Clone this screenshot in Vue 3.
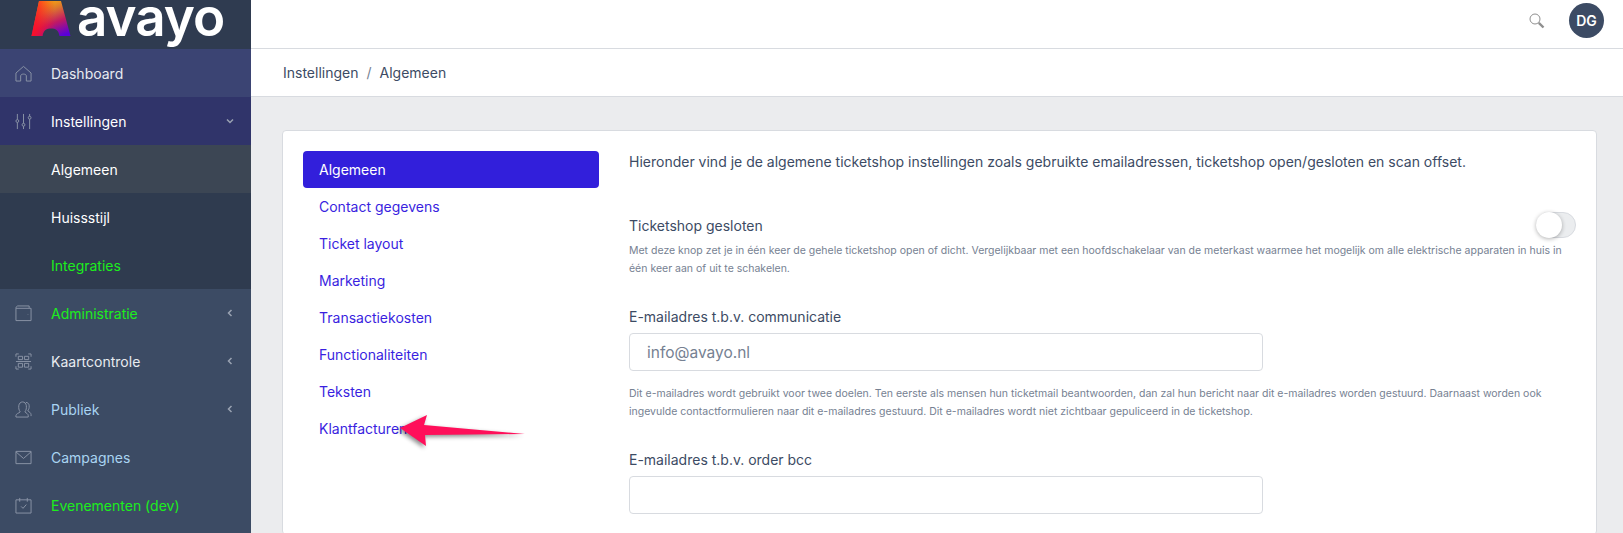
<script setup>
const settingsTabs = ['Algemeen', 'Contact gegevens', 'Ticket layout', 'Marketing', 'Transactiekosten', 'Functionaliteiten', 'Teksten', 'Klantfacturen']
</script>

<template>
    <div class="app">
        <aside class="sidebar">
            <div class="brand">
                <svg class="brand-mark" width="40" height="37" viewBox="0 0 40 37">
                    <defs>
                        <linearGradient id="markFill" x1="0.3" y1="0" x2="0.75" y2="1">
                            <stop offset="0" stop-color="#fdb10b" />
                            <stop offset="0.28" stop-color="#dd7a2c" />
                            <stop offset="0.62" stop-color="#c21a63" />
                            <stop offset="1" stop-color="#5a00d8" />
                        </linearGradient>
                        <linearGradient id="markRed" x1="0" y1="0" x2="1" y2="0">
                            <stop offset="0" stop-color="#ff0f24" stop-opacity="1" />
                            <stop offset="0.6" stop-color="#ff0f24" stop-opacity="0" />
                        </linearGradient>
                    </defs>
                    <path d="M8 1H30L39.500 36H28.500C27.500 30 24.500 28.500 20 28.500C15.500 28.500 12.500 30 11.500 36H0.500Z" fill="url(#markFill)" />
                    <path d="M8 1H30L39.500 36H28.500C27.500 30 24.500 28.500 20 28.500C15.500 28.500 12.500 30 11.500 36H0.500Z" fill="url(#markRed)" />
                </svg>
                <span class="brand-name">avayo</span>
            </div>

            <a class="nav-item dashboard">
                <svg class="nav-icon" viewBox="0 0 18 18"><path d="M1 8.500L9 1.500L17 8.500V17H12V11.500C12 9 6 9 6 11.500V17H1Z" /></svg>
                <span>Dashboard</span>
            </a>
            <a class="nav-item open">
                <svg class="nav-icon" viewBox="0 0 18 18"><path d="M2.500 1V7M2.500 10V17M9 1V11M9 14V17M15.500 1V3.500M15.500 6.500V17" /><circle cx="2.500" cy="8.500" r="1.500" /><circle cx="9" cy="12.500" r="1.500" /><circle cx="15.500" cy="5" r="1.500" /></svg>
                <span>Instellingen</span>
                <svg class="chevron" viewBox="0 0 8 8"><path d="M1 2.500L4 5.500L7 2.500" /></svg>
            </a>
            <div class="subnav">
                <a class="sub-item current">Algemeen</a>
                <a class="sub-item">Huissstijl</a>
                <a class="sub-item green">Integraties</a>
            </div>
            <a class="nav-item green">
                <svg class="nav-icon" viewBox="0 0 18 18"><path d="M3 1H15V3M1 3.500H17V16.500H1ZM1 3.500C1 2 2 1 3 1" /><path d="M13.500 10H14" /></svg>
                <span>Administratie</span>
                <svg class="chevron" viewBox="0 0 8 8"><path d="M5.500 1L2.500 4L5.500 7" /></svg>
            </a>
            <a class="nav-item">
                <svg class="nav-icon" viewBox="0 0 18 18"><path d="M1 4V1H4M14 1H17V4M1 14V17H4M14 17H17V14M3.500 3.500H8V7H3.500ZM10 3.500H14.500V7H10ZM1 9H17M3.500 11H8V15H3.500ZM10 11H14.500V15H10Z" /></svg>
                <span>Kaartcontrole</span>
                <svg class="chevron" viewBox="0 0 8 8"><path d="M5.500 1L2.500 4L5.500 7" /></svg>
            </a>
            <a class="nav-item sky">
                <svg class="nav-icon" viewBox="0 0 18 18"><path d="M1 17V15.500C1 13.500 4 13 5.500 11.500C4 9.500 3.800 7.500 4 5C4.300 2.500 6 1 8 1C10 1 11.700 2.500 12 5C12.200 7.500 12 9.500 10.500 11.500C12 13 14 13.500 14 15.500V17ZM11.500 1.500C13.500 1.500 15 3 15 5C15.200 7.500 14.500 9 13.500 10.500C15 11.500 17 12.500 17 14.500V16" /></svg>
                <span>Publiek</span>
                <svg class="chevron" viewBox="0 0 8 8"><path d="M5.500 1L2.500 4L5.500 7" /></svg>
            </a>
            <a class="nav-item sky">
                <svg class="nav-icon" viewBox="0 0 18 18"><path d="M1 2.500H17V15.500H1ZM1 3L9 10L17 3" /></svg>
                <span>Campagnes</span>
            </a>
            <a class="nav-item green">
                <svg class="nav-icon" viewBox="0 0 18 18"><path d="M1 3H17V17H1ZM5 1V5M13 1V5M6.500 10L8.500 12L12 8" /></svg>
                <span>Evenementen (dev)</span>
            </a>
        </aside>

        <main class="main">
            <header class="topbar">
                <svg class="search" width="16" height="16" viewBox="0 0 16 16"><circle cx="6" cy="6" r="5" /><path d="M9.800 9.800L14.500 14.500" stroke-width="2.400" /></svg>
                <div class="avatar">DG</div>
            </header>
            <nav class="breadcrumb">
                <span>Instellingen</span>
                <span class="sep">/</span>
                <span>Algemeen</span>
            </nav>

            <section class="body">
                <div class="card">
                    <ul class="tabs">
                        <li v-for="(tab, i) in settingsTabs" :key="tab" :class="{ active: i === 0 }">{{ tab }}</li>
                    </ul>

                    <div class="settings">
                        <p class="intro">Hieronder vind je de algemene ticketshop instellingen zoals gebruikte emailadressen, ticketshop open/gesloten en scan offset.</p>

                        <div class="toggle-row">
                            <span class="label">Ticketshop gesloten</span>
                            <span class="toggle"><span class="knob"></span></span>
                        </div>
                        <p class="help help-toggle">Met deze knop zet je in één keer de gehele ticketshop open of dicht. Vergelijkbaar met een hoofdschakelaar van de meterkast waarmee het mogelijk om alle elektrische apparaten in huis in één keer aan of uit te schakelen.</p>

                        <label class="label field-label">E-mailadres t.b.v. communicatie</label>
                        <input class="input" type="text" value="info@avayo.nl">
                        <p class="help help-mail">Dit e-mailadres wordt gebruikt voor twee doelen. Ten eerste als mensen hun ticketmail beantwoorden, dan zal hun bericht naar dit e-mailadres worden gestuurd. Daarnaast worden ook ingevulde contactformulieren naar dit e-mailadres gestuurd. Dit e-mailadres wordt niet zichtbaar gepuliceerd in de ticketshop.</p>

                        <label class="label field-label">E-mailadres t.b.v. order bcc</label>
                        <input class="input" type="text">
                    </div>
                </div>
            </section>
        </main>

        <svg class="arrow" width="140" height="46" viewBox="0 0 140 46">
            <path d="M6 20L33 7L30 17L131 26L31 27L32 38Z" />
        </svg>
    </div>
</template>

<style scoped>
.app {
    display: flex;
    height: 533px;
    overflow: hidden;
    font-family: Inter, "Noto Sans", sans-serif;
    font-size: 14px;
    color: #3c4b64;
}

.sidebar {
    width: 251px;
    flex: none;
    background: #3c4b64;
}

.brand {
    height: 49px;
    background: #2f3b50;
    display: flex;
    align-items: flex-start;
    padding-left: 31px;
    box-sizing: border-box;
    gap: 6px;
    overflow: hidden;
}

.brand-mark {
    margin-top: 0;
}

.brand-name {
    color: #fff;
    font-size: 53px;
    font-weight: 600;
    line-height: 34px;
    letter-spacing: -1px;
}

.nav-item {
    height: 48px;
    display: flex;
    align-items: center;
    padding-left: 15px;
    color: #e8ebf0;
}

.nav-icon {
    width: 17px;
    height: 17px;
    margin-right: 19px;
    fill: none;
    stroke: #8c96a8;
    stroke-width: 1;
}

.chevron {
    width: 8px;
    height: 8px;
    margin-left: auto;
    margin-right: 17px;
    fill: none;
    stroke: #9aa3b2;
    stroke-width: 1.500;
}

.dashboard {
    background: #3b4473;
}

.open {
    background: #30346a;
    color: #fff;
}

.subnav {
    background: #2f3b4f;
}

.sub-item {
    height: 48px;
    display: flex;
    align-items: center;
    padding-left: 51px;
    color: #fff;
}

.sub-item.current {
    background: #3c4654;
}

.green,
.sub-item.green {
    color: #1dee1d;
}

.sky {
    color: #a9d4f2;
}

.main {
    flex: 1;
    min-width: 0;
    background: #ebecee;
}

.topbar {
    height: 49px;
    box-sizing: border-box;
    background: #fff;
    border-bottom: 1px solid #d8dbe0;
    display: flex;
    align-items: center;
    justify-content: flex-end;
    padding: 0 19px 7px 0;
}

.search {
    margin-right: 24px;
    fill: none;
    stroke: #8f8f8f;
    stroke-width: 1;
}

.avatar {
    width: 35px;
    height: 35px;
    border-radius: 50%;
    background: #3c4b64;
    color: #fff;
    font-weight: 600;
    font-size: 14px;
    display: flex;
    align-items: center;
    justify-content: center;
}

.breadcrumb {
    height: 48px;
    box-sizing: border-box;
    background: #fff;
    border-bottom: 1px solid #d8dbe0;
    display: flex;
    align-items: center;
    gap: 8px;
    padding-left: 32px;
}

.sep {
    color: #768192;
}

.body {
    padding: 33px 26px 0 31px;
}

.card {
    display: grid;
    grid-template-columns: 296px 1fr;
    column-gap: 30px;
    background: #fff;
    border: 1px solid #d8dbe0;
    border-radius: 4px;
    padding: 20px;
}

.tabs {
    list-style: none;
    margin: 0;
    padding: 0;
}

.tabs li {
    height: 37px;
    line-height: 37px;
    padding-left: 16px;
    color: #3a1fe0;
    border-radius: 4px;
}

.tabs li.active {
    background: #321fdb;
    color: #fff;
}

.settings {
    min-width: 0;
    padding-right: 0;
}

.intro {
    margin: 0;
    line-height: 21px;
}

.toggle-row {
    display: flex;
    align-items: center;
    justify-content: space-between;
    margin-top: 40px;
    height: 26px;
}

.label {
    display: block;
    line-height: 21px;
}

.toggle {
    width: 40px;
    height: 26px;
    box-sizing: border-box;
    border: 1px solid #d8dbe0;
    border-radius: 13px;
    background: #ebedef;
    display: flex;
}

.knob {
    width: 26px;
    height: 26px;
    margin: -1px;
    border-radius: 50%;
    background: #fff;
    box-shadow: 0 1px 4px rgb(0 0 0 / 30%);
}

.help {
    margin: 0;
    color: #768192;
    font-size: 10.500px;
    line-height: 18px;
}

.help-toggle {
    margin-top: 4px;
}

.field-label {
    margin-top: 28px;
}

.input {
    display: block;
    width: 634px;
    height: 38px;
    box-sizing: border-box;
    margin-top: 6px;
    padding: 0 17px;
    border: 1px solid #d8dbe0;
    border-radius: 4px;
    background: #fff;
    color: #768192;
    font-family: inherit;
    font-size: 15.500px;
}

.help-mail {
    margin-top: 14px;
}

.arrow {
    position: absolute;
    left: 394px;
    top: 408px;
    overflow: visible;
    filter: drop-shadow(-2px 2px 2px rgb(0 0 0 / 45%));
}

.arrow path {
    fill: #ff0f5a;
}
</style>

<style>
html,
body {
    margin: 0;
    overflow: hidden;
}
</style>
